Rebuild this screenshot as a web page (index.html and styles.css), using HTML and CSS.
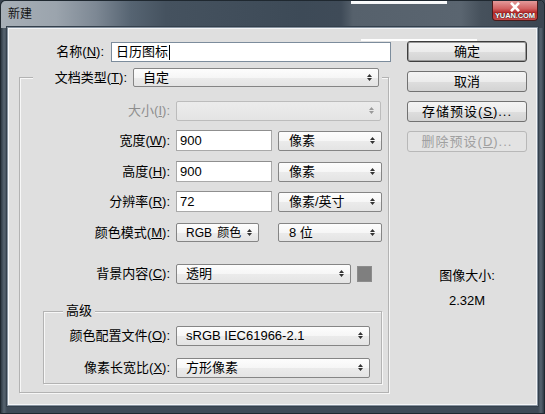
FILE: index.html
```html
<!DOCTYPE html>
<html lang="zh-CN">
<head>
<meta charset="utf-8">
<title>新建</title>
<link rel="stylesheet" href="styles.css">
</head>
<body>
<div class="window">
  <div class="titlebar">
    <span class="title">新建</span>
    <div class="close">
      <svg class="close-x" width="12" height="10" viewBox="0 0 12 10"><path d="M2 0.8 L10 9.2 M10 0.8 L2 9.2" stroke="#fff" stroke-width="2.6" fill="none"/></svg>
      <span class="wm">YUAN.COM</span>
    </div>
  </div>
  <div class="client">
    <span class="glare"></span>
    <div class="left">
      <div class="row name-row">
        <label class="lbl lbl-name">名称(<u>N</u>):</label>
        <div class="input name-input">日历图标<span class="caret"></span></div>
      </div>

      <div class="group">
        <div class="row preset-row">
          <label class="lbl lbl-preset">文档类型(<u>T</u>):</label>
          <div class="select w-preset"><span>自定</span><svg class="arr" width="5" height="9" viewBox="0 0 5 9"><path d="M0 4 L2.5 1 L5 4Z M0 5 L2.5 8 L5 5Z"/></svg></div>
        </div>

        <div class="row frow r-size">
          <label class="lbl lbl-main disabled">大小(<u>I</u>):</label>
          <div class="select disabled w-full"><span></span><svg class="arr" width="5" height="9" viewBox="0 0 5 9"><path d="M0 4 L2.5 1 L5 4Z M0 5 L2.5 8 L5 5Z"/></svg></div>
        </div>

        <div class="row frow r-next">
          <label class="lbl lbl-main">宽度(<u>W</u>):</label>
          <div class="input w-num">900</div>
          <div class="select w-unit"><span>像素</span><svg class="arr" width="5" height="9" viewBox="0 0 5 9"><path d="M0 4 L2.5 1 L5 4Z M0 5 L2.5 8 L5 5Z"/></svg></div>
        </div>

        <div class="row frow r-next2">
          <label class="lbl lbl-main">高度(<u>H</u>):</label>
          <div class="input w-num">900</div>
          <div class="select w-unit"><span>像素</span><svg class="arr" width="5" height="9" viewBox="0 0 5 9"><path d="M0 4 L2.5 1 L5 4Z M0 5 L2.5 8 L5 5Z"/></svg></div>
        </div>

        <div class="row frow r-next">
          <label class="lbl lbl-main">分辨率(<u>R</u>):</label>
          <div class="input w-num">72</div>
          <div class="select w-unit"><span>像素/英寸</span><svg class="arr" width="5" height="9" viewBox="0 0 5 9"><path d="M0 4 L2.5 1 L5 4Z M0 5 L2.5 8 L5 5Z"/></svg></div>
        </div>

        <div class="row frow r-mode">
          <label class="lbl lbl-main">颜色模式(<u>M</u>):</label>
          <div class="select w-mode"><span class="narrow">RGB 颜色</span><svg class="arr" width="5" height="9" viewBox="0 0 5 9"><path d="M0 4 L2.5 1 L5 4Z M0 5 L2.5 8 L5 5Z"/></svg></div>
          <div class="select w-unit"><span>8 位</span><svg class="arr" width="5" height="9" viewBox="0 0 5 9"><path d="M0 4 L2.5 1 L5 4Z M0 5 L2.5 8 L5 5Z"/></svg></div>
        </div>

        <div class="row frow r-bg">
          <label class="lbl lbl-main">背景内容(<u>C</u>):</label>
          <div class="select w-bg"><span>透明</span><svg class="arr" width="5" height="9" viewBox="0 0 5 9"><path d="M0 4 L2.5 1 L5 4Z M0 5 L2.5 8 L5 5Z"/></svg></div>
          <div class="swatch"></div>
        </div>

        <div class="subgroup">
          <div class="legend">高级</div>
          <div class="row frow r-prof">
            <label class="lbl lbl-sub">颜色配置文件(<u>O</u>):</label>
            <div class="select w-sub"><span>sRGB IEC61966-2.1</span><svg class="arr" width="5" height="9" viewBox="0 0 5 9"><path d="M0 4 L2.5 1 L5 4Z M0 5 L2.5 8 L5 5Z"/></svg></div>
          </div>
          <div class="row frow r-aspect">
            <label class="lbl lbl-sub">像素长宽比(<u>X</u>):</label>
            <div class="select w-sub"><span>方形像素</span><svg class="arr" width="5" height="9" viewBox="0 0 5 9"><path d="M0 4 L2.5 1 L5 4Z M0 5 L2.5 8 L5 5Z"/></svg></div>
          </div>
        </div>
      </div>
    </div>

    <div class="right">
      <button class="btn default">确定</button>
      <button class="btn">取消</button>
      <button class="btn spaced">存储预设(<u>S</u>)...</button>
      <button class="btn spaced disabled">删除预设(<u>D</u>)...</button>
      <div class="size-title">图像大小:</div>
      <div class="size-value">2.32M</div>
    </div>
  </div>
</div>
</body>
</html>
```

FILE: styles.css
```css
* { box-sizing: border-box; }
html, body { margin: 0; padding: 0; }
body {
  width: 545px;
  height: 414px;
  overflow: hidden;
  background: #3a4450;
  font-family: "Liberation Sans", "Noto Sans CJK SC", sans-serif;
  font-size: 13px;
  color: #000;
}

.window {
  width: 545px;
  height: 414px;
  display: flex;
  flex-direction: column;
  background: linear-gradient(90deg, #2f3a45 0, #56636f 3px, #3e4a57 6px, #3e4a57 calc(100% - 6px), #56636f calc(100% - 3px), #2f3a45 100%);
  border: 1px solid #1f2830;
  border-radius: 5px 5px 0 0;
}

/* title bar */
.titlebar {
  height: 27px;
  flex: none;
  display: flex;
  justify-content: space-between;
  align-items: flex-start;
  border-radius: 5px 5px 0 0;
  background:
    linear-gradient(#ffffff, #f2f4f6) 350px 0 / 96px 3px no-repeat,
    linear-gradient(90deg, #a7afb7 0, #9ba4ad 55px, #7d8894 95px, #566472 130px, #45525f 165px, #3d4a57 300px, #3f4b58 340px, #56616c 352px, #5a6570 460px, #46515c 480px, #3b4551 100%);
}
.title {
  margin: 6px 0 0 7px;
  font-size: 12px;
  line-height: 14px;
  color: #141414;
}
.close {
  width: 46px;
  height: 20px;
  margin-right: 6px;
  display: flex;
  flex-direction: column;
  align-items: center;
  border: 1px solid #4b1a1a;
  border-top: none;
  border-radius: 0 0 4px 4px;
  background: linear-gradient(#e49a9a 0, #d26262 40%, #b62b2b 60%, #c84a4a 100%);
  overflow: hidden;
}
.close-x { margin-top: 1px; flex: none; }
.wm {
  font-family: "Liberation Sans", sans-serif;
  font-size: 7.5px;
  font-weight: bold;
  line-height: 8px;
  color: #fff;
  letter-spacing: -0.1px;
  text-shadow: 0 0 1px #222, 0 0 1px #222;
  white-space: nowrap;
}

/* client area */
.client {
  flex: 1;
  margin: 0 7px 8px 7px;
  display: flex;
  position: relative;
  background: #dfdfdf;
  box-shadow: inset 0 0 0 1px #f4f5f6, 0 0 0 1px #8793a0, 0 0 0 2px #34404c;
}
.glare {
  position: absolute;
  left: 353px;
  top: 11px;
  width: 116px;
  height: 2px;
  background: #ffffff;
}

.left { width: 399px; flex: none; }
.right {
  width: 120px;
  flex: none;
  margin-top: 13px;
  display: flex;
  flex-direction: column;
}

.row { display: flex; align-items: center; }
.lbl { flex: none; text-align: right; white-space: nowrap; line-height: 16px; }
.lbl u { text-underline-offset: 1px; }
.lbl.disabled { color: #8e8e8e; }

/* name */
.name-row { margin-top: 14px; height: 20px; }
.lbl-name { width: 96px; margin-right: 7px; }
.input {
  height: 21px;
  background: #fff;
  border: 1px solid #a9a9a9;
  border-top-color: #8f8f8f;
  padding-left: 3px;
  display: flex;
  align-items: center;
  line-height: 16px;
  white-space: nowrap;
}
.name-input {
  width: 280px;
  height: 20px;
  border-color: #7c8c9c;
  padding-left: 4px;
}
.caret {
  display: inline-block;
  width: 1px;
  height: 15px;
  background: #000;
  margin-left: 1px;
}

/* group boxes */
.group {
  margin-top: 15px;
  margin-left: 11px;
  width: 370px;
  border: 1px solid #b3b3b3;
  box-shadow: inset 1px 1px 0 #f7f7f7, 1px 1px 0 #f7f7f7;
  padding-bottom: 8px;
}
.preset-row {
  margin-top: -10px;
  margin-left: 13px;
  width: 349px;
  height: 19px;
  background: #dfdfdf;
}
.lbl-preset { width: 94px; margin-right: 6px; }

.frow { height: 21px; }
.lbl-main { width: 150px; margin-right: 6px; }
.lbl-sub { width: 126px; margin-right: 6px; }
.r-size { margin-top: 13px; }
.r-next { margin-top: 9px; }
.r-next2 { margin-top: 10px; }
.r-mode { margin-top: 10px; }
.r-bg { margin-top: 20px; }

.subgroup {
  margin-top: 27px;
  margin-left: 23px;
  width: 339px;
  border: 1px solid #b3b3b3;
  box-shadow: inset 1px 1px 0 #f7f7f7, 1px 1px 0 #f7f7f7;
  padding-bottom: 5px;
}
.legend {
  margin-top: -8px;
  margin-left: 19px;
  width: fit-content;
  padding: 0 3px;
  line-height: 14px;
  background: #dfdfdf;
}
.r-prof { margin-top: 7px; }
.r-aspect { margin-top: 11px; }

/* selects */
.select {
  flex: none;
  height: 20px;
  display: flex;
  align-items: center;
  justify-content: space-between;
  padding: 0 6px 0 9px;
  border: 1px solid #858585;
  border-radius: 2px;
  background: linear-gradient(#fdfdfd 0, #f6f6f6 50%, #ebebeb 51%, #e4e4e4 100%);
  line-height: 16px;
  white-space: nowrap;
}
.select .arr { fill: #333; flex: none; }
.select.disabled {
  border-color: #bcbcbc;
  background: linear-gradient(#ececec, #e4e4e4);
}
.select.disabled .arr { fill: #9a9a9a; }
.narrow { font-size: 12px; word-spacing: 2px; }

.w-preset { width: 246px; height: 19px; }
.w-full { width: 205px; }
.w-num { width: 96px; margin-right: 6px; }
.w-unit { width: 104px; padding-left: 10px; }
.w-mode { width: 83px; margin-right: 19px; padding-left: 9px; height: 19px; }
.r-mode .w-unit { height: 19px; }
.w-bg { width: 175px; }
.w-sub { width: 194px; }
.swatch {
  width: 15px;
  height: 16px;
  margin-left: 6px;
  background: #7f7f7f;
  border: 1px solid #8c8c8c;
}

/* buttons */
.btn {
  height: 21px;
  width: 120px;
  margin: 0 0 9px 0;
  padding: 0;
  font: inherit;
  color: #000;
  border: 1px solid #727272;
  border-radius: 3px;
  background: linear-gradient(#f4f4f4 0, #ececec 50%, #dedede 51%, #d3d3d3 100%);
  line-height: 16px;
}
.btn.default {
  border-color: #3e3e3e;
  box-shadow: inset 0 0 0 1px #9a9a9a;
}
.btn.spaced { letter-spacing: 1px; }
.btn.disabled {
  color: #a0a0a0;
  border-color: #b8b8b8;
  background: #e3e3e3;
}
.size-title {
  margin-top: 107px;
  text-align: center;
  line-height: 16px;
}
.size-value {
  margin-top: 9px;
  text-align: center;
  line-height: 16px;
}
```
